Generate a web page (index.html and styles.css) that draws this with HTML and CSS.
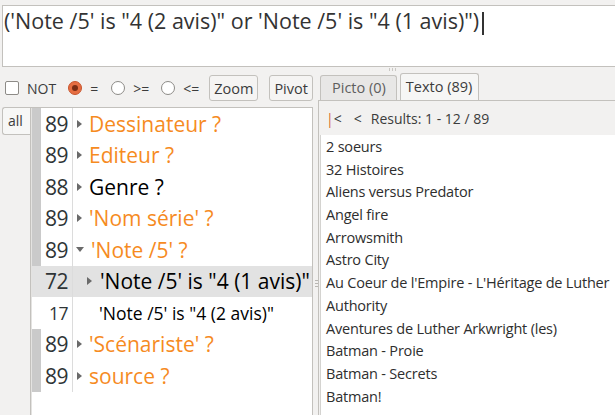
FILE: index.html
```html
<!DOCTYPE html>
<html>
<head>
<meta charset="utf-8">
<link rel="stylesheet" href="styles.css">
</head>
<body>
<div class="editor">('Note /5' is "4 (2 avis)" or 'Note /5' is "4 (1 avis)")<span class="caret"></span></div>
<div class="hsplit"><span></span><span></span><span></span></div>
<div class="main">
  <div class="left">
    <div class="toolbar">
      <span class="check"></span><span class="lbl">NOT</span>
      <span class="radio on"></span><span class="lbl eq">=</span>
      <span class="radio"></span><span class="lbl">&gt;=</span>
      <span class="radio"></span><span class="lbl">&lt;=</span>
      <span class="btn">Zoom</span>
      <span class="btn">Pivot</span>
    </div>
    <div class="leftbody">
      <div class="alltab">all</div>
      <div class="tree">
        <div class="row top"><span class="gut"></span><span class="num">89</span><span class="tri"></span><span class="label orange">Dessinateur ?</span></div>
        <div class="row top"><span class="gut"></span><span class="num">89</span><span class="tri"></span><span class="label orange">Editeur ?</span></div>
        <div class="row top"><span class="gut"></span><span class="num">88</span><span class="tri"></span><span class="label">Genre ?</span></div>
        <div class="row top"><span class="gut"></span><span class="num">89</span><span class="tri"></span><span class="label orange">'Nom série' ?</span></div>
        <div class="row top"><span class="gut"></span><span class="num">89</span><span class="tri down"></span><span class="label orange">'Note /5' ?</span></div>
        <div class="row sel"><span class="gut"></span><span class="num">72</span><span class="tri child"></span><span class="label">'Note /5' is "4 (1 avis)"</span></div>
        <div class="row small"><span class="gut"></span><span class="num">17</span><span class="tri none"></span><span class="label">'Note /5' is "4 (2 avis)"</span></div>
        <div class="row top"><span class="gut"></span><span class="num">89</span><span class="tri"></span><span class="label orange">'Scénariste' ?</span></div>
        <div class="row top"><span class="gut"></span><span class="num">89</span><span class="tri"></span><span class="label orange">source ?</span></div>
      </div>
    </div>
  </div>
  <div class="vsplit"><span></span><span></span><span></span></div>
  <div class="right">
    <div class="tabs">
      <span class="tab">Picto (0)</span>
      <span class="tab active">Texto (89)</span>
    </div>
    <div class="panel">
      <div class="nav"><span class="first"><b>|</b>&lt;</span><span class="prev">&lt;</span><span>Results: 1 - 12 / 89</span></div>
      <div class="list">
        <div class="item">2 soeurs</div>
        <div class="item">32 Histoires</div>
        <div class="item">Aliens versus Predator</div>
        <div class="item">Angel fire</div>
        <div class="item">Arrowsmith</div>
        <div class="item">Astro City</div>
        <div class="item">Au Coeur de l'Empire - L'Héritage de Luther</div>
        <div class="item">Authority</div>
        <div class="item">Aventures de Luther Arkwright (les)</div>
        <div class="item">Batman - Proie</div>
        <div class="item">Batman - Secrets</div>
        <div class="item">Batman!</div>
      </div>
    </div>
  </div>
</div>
</body>
</html>
```

FILE: styles.css
```css
* { box-sizing: border-box; }
html, body { margin: 0; padding: 0; }
body {
  width: 615px;
  height: 415px;
  overflow: hidden;
  background: #f2f1f0;
  font-family: "Open Sans", "Noto Sans", sans-serif;
  color: #3c3c3c;
}
.editor {
  margin: 5px 0 0 2px;
  height: 62px;
  background: #fff;
  border: 1px solid #c3c1bd;
  border-right: none;
  font-size: 21.5px;
  line-height: 28px;
  padding: 1px 0 0 1px;
  white-space: nowrap;
  color: #333;
}
.caret {
  display: inline-block;
  width: 2px;
  height: 23px;
  background: #333;
  vertical-align: -6px;
  margin-left: 3px;
}
.hsplit {
  height: 5px;
  display: flex;
  justify-content: center;
  gap: 2px;
  padding: 1px 0 0 170px;
}
.hsplit span { width: 1px; height: 3px; background: #c9c7c3; }
.main { display: flex; height: 343px; }
.left { width: 313px; display: flex; flex-direction: column; }
.toolbar {
  height: 35px;
  display: flex;
  align-items: center;
  padding: 0 0 3px 5px;
  font-size: 14px;
}
.toolbar > * { flex-shrink: 0; }
.check {
  width: 14px; height: 14px;
  border: 1px solid #8d8b87;
  border-radius: 2px;
  background: #fff;
  margin-right: 8px;
}
.lbl { color: #3c3c3c; margin-right: 12px; }
.lbl.eq { margin-right: 13px; }
.radio {
  width: 14px; height: 14px;
  border-radius: 50%;
  border: 1px solid #8d8b87;
  background: #fff;
  margin-right: 8px;
}
.radio.on {
  background: #e66e42;
  border-color: #c8552d;
  position: relative;
}
.radio.on::after {
  content: "";
  position: absolute;
  left: 3px; top: 3px;
  width: 6px; height: 6px;
  border-radius: 50%;
  background: #7a2d14;
}
.btn {
  height: 26px;
  padding: 0 4px;
  display: flex;
  align-items: center;
  border: 1px solid #c3c1bd;
  border-radius: 3px;
  background: #f5f4f3;
  font-size: 14.5px;
  color: #3c3c3c;
  margin-left: -2px;
  margin-right: 13px;
}
.btn:last-child { margin-right: 0; }
.leftbody { display: flex; flex: 1; padding-left: 2px; }
.alltab {
  width: 28px;
  height: 28px;
  border: 1px solid #c3c1bd;
  border-right: none;
  border-radius: 3px 0 0 3px;
  background: #f7f7f6;
  font-size: 14px;
  padding: 3px 0 0 5px;
}
.tree {
  flex: 1;
  border: 1px solid #c3c1bd;
  border-bottom: none;
  background: #fff;
  padding: 0 0 0 1px;
  box-shadow: inset 1px 0 0 #e4e3e1;
  overflow: hidden;
}
.row {
  height: 31.5px;
  display: flex;
  align-items: center;
  font-size: 21px;
  color: #000;
  white-space: nowrap;
}
.gut { width: 9px; align-self: stretch; flex-shrink: 0; }
.row.top .gut { background: #cacaca; }
.num {
  width: 32px;
  flex-shrink: 0;
  align-self: stretch;
  display: flex;
  align-items: center;
  justify-content: flex-end;
  padding-right: 4px;
  border-right: 1px solid #dcdcdc;
  color: #2e3436;
  letter-spacing: -0.5px;
}
.tri {
  flex-shrink: 0;
  width: 0; height: 0;
  border-top: 4px solid transparent;
  border-bottom: 4px solid transparent;
  border-left: 5px solid #6a6a6a;
  margin: 0 7px 0 4px;
}
.tri.down {
  border-left: 4px solid transparent;
  border-right: 4px solid transparent;
  border-top: 5px solid #6a6a6a;
  border-bottom: none;
  margin: 0 7px 0 3px;
}
.tri.child { margin: 0 8px 0 14px; }
.tri.none { border: none; margin: 0 0 0 26px; }
.orange { color: #f68b1f; }
.row.sel { background: #e2e2e2; }
.row.small { font-size: 17.5px; }
.row.small .num { font-size: 17.5px; }
.vsplit {
  width: 7px;
  display: flex;
  flex-direction: column;
  justify-content: center;
  align-items: center;
  gap: 2px;
  padding-top: 80px;
}
.vsplit span { width: 4px; height: 1px; background: #b8b6b2; }
.right { flex: 1; display: flex; flex-direction: column; }
.tabs {
  height: 28px;
  display: flex;
  align-items: flex-end;
  font-size: 14.5px;
}
.tab {
  height: 25px;
  padding: 2px 10px 0 11px;
  border: 1px solid #c3c1bd;
  border-bottom: none;
  border-radius: 3px 3px 0 0;
  background: #e8e7e6;
  color: #5e5e5e;
  margin-right: 3px;
}
.tab.active {
  height: 27px;
  background: #f6f6f5;
  color: #3c3c3c;
  padding: 3px 6px 0 5px;
}
.panel {
  flex: 1;
  border-left: 1px solid #c3c1bd;
  border-top: 1px solid #c3c1bd;
  display: flex;
  flex-direction: column;
  margin-left: -2px;
}
.nav {
  height: 34px;
  display: flex;
  align-items: center;
  padding-left: 7px;
  font-size: 14px;
  color: #3c3c3c;
}
.nav .first b { font-weight: normal; color: #d96a28; }
.nav .first { margin-right: 12px; }
.nav .prev { margin-right: 9px; }
.list {
  flex: 1;
  margin-left: 1px;
  background: #fff;
  border-left: 1px solid #d4d3d0;
  padding: 1px 0 0 5px;
}
.item {
  height: 22.7px;
  line-height: 22px;
  font-size: 14.5px;
  color: #2e2e2e;
  white-space: nowrap;
  letter-spacing: -0.2px;
}
```
